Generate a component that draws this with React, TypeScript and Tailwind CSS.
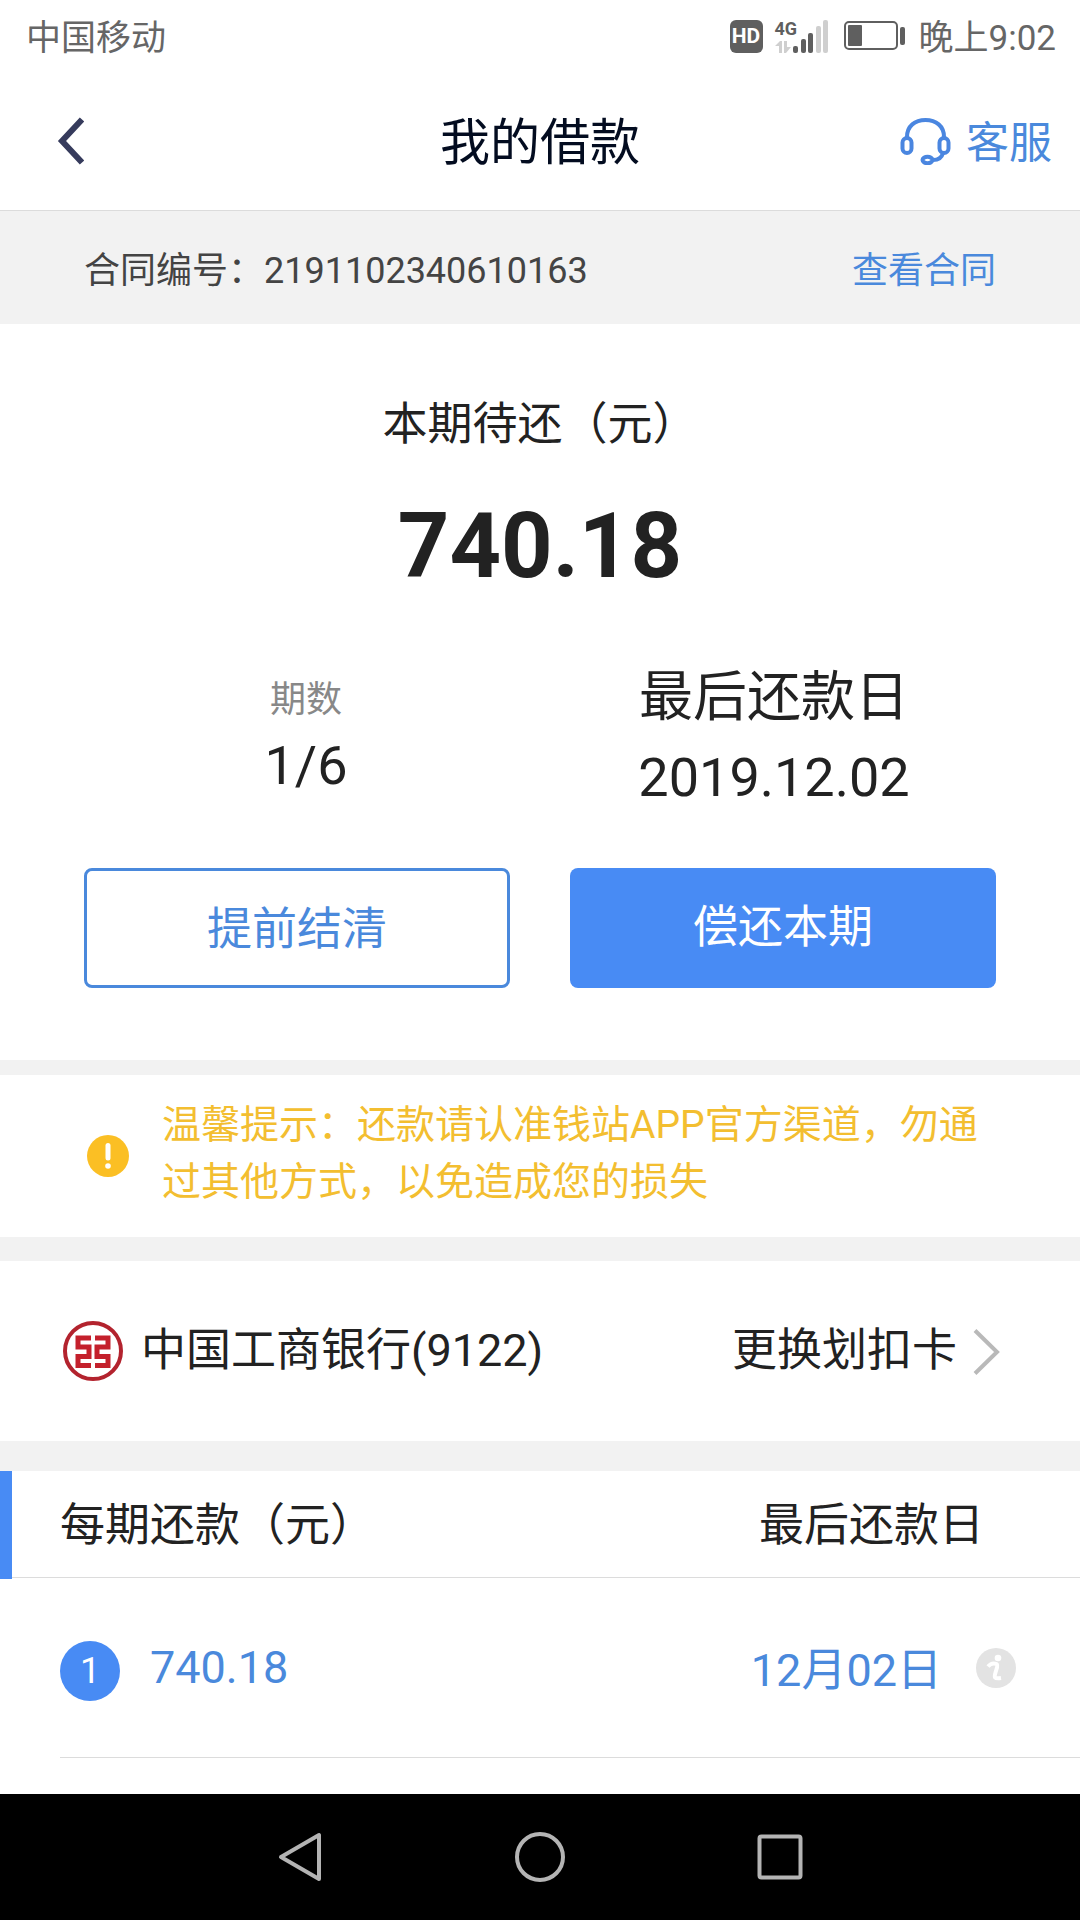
import type { ReactNode } from 'react';

const FONT = "font-[Roboto,'Noto_Sans_CJK_SC',sans-serif]";

const installments = [{ no: 1, amount: '740.18', date: '12月02日' }];

function SignalIcon() {
  return (
    <svg width="35" height="33" viewBox="0 0 35 33" aria-hidden="true">
      <rect x="0" y="26" width="5" height="7" rx="2" fill="#5f5f5f" />
      <rect x="8" y="19" width="5" height="14" rx="2" fill="#5f5f5f" />
      <rect x="15" y="13" width="5" height="20" rx="2" fill="#5f5f5f" />
      <rect x="23" y="6" width="5" height="27" rx="2" fill="#cfcfcf" />
      <rect x="30" y="0" width="5" height="33" rx="2" fill="#cfcfcf" />
    </svg>
  );
}

function DataArrows() {
  return (
    <svg width="16" height="12" viewBox="0 0 16 12" aria-hidden="true" fill="#cfcfcf">
      <path d="M0 5 L5 0 H7 V12 H4 V5 Z" />
      <path d="M9 0 H12 V6 H16 L11 12 H9 Z" />
    </svg>
  );
}

function BatteryIcon() {
  return (
    <svg width="61" height="30" viewBox="0 0 61 30" aria-hidden="true">
      <rect x="1" y="1" width="52" height="27" rx="4" fill="none" stroke="#5f5f5f" strokeWidth="2" />
      <rect x="4" y="4" width="14" height="21" rx="1" fill="#5f5f5f" />
      <rect x="56" y="6" width="5" height="18" rx="2" fill="#5f5f5f" />
    </svg>
  );
}

function HeadsetIcon() {
  return (
    <svg width="51" height="48" viewBox="0 0 51 48" fill="none" stroke="#4a86e0" strokeWidth="4" aria-hidden="true">
      <path d="M7 20 C7 9 15 3 25.500 3 C36 3 44 9 44 20" />
      <rect x="2.500" y="21" width="9" height="15" rx="4.500" />
      <rect x="39.500" y="21" width="9" height="15" rx="4.500" />
      <ellipse cx="27.500" cy="43" rx="5" ry="3.200" />
      <path d="M33 43 C39 43 42 40 43 36" />
    </svg>
  );
}

function BankLogo() {
  return (
    <svg width="60" height="60" viewBox="0 0 60 60" fill="none" aria-hidden="true">
      <circle cx="30" cy="30" r="28" stroke="#b3232e" strokeWidth="4" />
      <g stroke="#c4202c" strokeWidth="5">
        <path d="M28 17 H15 V26 H26 V35.500 H15 V44.500 H28" />
        <path d="M32 17 H45 V26 H34 V35.500 H45 V44.500 H32" />
      </g>
    </svg>
  );
}

function InfoIcon() {
  return (
    <svg width="40" height="40" viewBox="0 0 40 40" fill="none" aria-hidden="true">
      <circle cx="20" cy="20" r="20" fill="#e3e3e3" />
      <circle cx="22" cy="10" r="3.300" fill="#fff" />
      <path
        d="M12 18.500 C14.500 15.500 18 15 20.500 16 C22.500 17 20.500 21 19.500 24.500 C18 29.500 18 31 25 30"
        stroke="#fff"
        strokeWidth="4"
      />
    </svg>
  );
}

function StatusBar() {
  return (
    <div className="flex h-[72px] items-center justify-between pl-[26px] pr-6 text-[35px] leading-[40px] text-[#666]">
      <span className="pt-1.5">中国移动</span>
      <div className="flex items-center">
        <span className="flex h-[33px] w-[33px] items-center justify-center rounded-md bg-[#5f5f5f] text-[21px] font-bold text-white">
          HD
        </span>
        <div className="ml-3 flex h-[33px] w-[18px] flex-col justify-between">
          <span className="font-['Liberation_Sans_Narrow',Roboto,sans-serif] text-[18px] font-bold leading-[18px] text-[#5f5f5f]">
            4G
          </span>
          <DataArrows />
        </div>
        <SignalIcon />
        <div className="ml-4 mr-[14px]">
          <BatteryIcon />
        </div>
        <span className="pt-1.5">晚上9:02</span>
      </div>
    </div>
  );
}

function Header() {
  return (
    <header className="grid h-[139px] grid-cols-[1fr_auto_1fr] items-center border-b border-[#dcdcdc] px-7">
      <button type="button" aria-label="返回" className="justify-self-start pl-7">
        <svg width="28" height="48" viewBox="0 0 28 48" fill="none" stroke="#363b5c" strokeWidth="6">
          <path d="M26 2.500 L6 24 L26 45.500" />
        </svg>
      </button>
      <h1 className="pt-1 text-[50px] leading-[60px] text-[#030c20]">我的借款</h1>
      <a href="#service" className="flex items-center gap-[15px] justify-self-end text-[43px] leading-[60px] text-[#4a89dc]">
        <HeadsetIcon />
        <span className="pt-1">客服</span>
      </a>
    </header>
  );
}

function Stat({ label, children }: { label: ReactNode; children: ReactNode }) {
  return (
    <div className="flex flex-col items-center">
      {label}
      {children}
    </div>
  );
}

export default function App() {
  return (
    <div className={`flex min-h-screen flex-col bg-white text-[#222] ${FONT}`} lang="zh-CN">
      <StatusBar />
      <Header />

      <div className="flex h-[113px] items-center justify-between bg-[#f2f2f2] px-[84px] pt-1.5 text-[36px]">
        <p className="text-[#444]">合同编号：2191102340610163</p>
        <a href="#contract" className="text-[#4a89dc]">查看合同</a>
      </div>

      <section className="pb-[72px] pt-[71px] text-center">
        <h2 className="text-[45px] leading-[60px]">本期待还（元）</h2>
        <p className="mt-[38px] text-[90px] font-bold leading-[108px]">740.18</p>
        <div className="mt-[61px] grid grid-cols-2 px-[72px]">
          <Stat label={<span className="mt-[12px] text-[36px] leading-[52px] text-[#888]">期数</span>}>
            <span className="mt-[5px] text-[54px] leading-[70px]">1/6</span>
          </Stat>
          <Stat label={<span className="text-[54px] leading-[72px]">最后还款日</span>}>
            <span className="mt-[9px] text-[54px] leading-[70px]">2019.12.02</span>
          </Stat>
        </div>
        <div className="mt-[55px] grid grid-cols-2 gap-[60px] px-[84px] text-[45px]">
          <button type="button" className="h-[120px] rounded-lg border-[3px] border-[#4a89dc] pt-1 text-[#4a89dc]">
            提前结清
          </button>
          <button type="button" className="h-[120px] rounded-lg bg-[#488bf4] text-white">
            偿还本期
          </button>
        </div>
      </section>

      <div className="h-[15px] bg-[#f2f2f2]" />

      <div className="flex h-[162px] items-center pl-[87px] pr-[84px]">
        <svg width="42" height="42" viewBox="0 0 42 42" className="shrink-0" aria-hidden="true">
          <circle cx="21" cy="21" r="21" fill="#fbbf24" />
          <path d="M21 10.500 V23" stroke="#fff" strokeWidth="5" strokeLinecap="round" />
          <circle cx="21" cy="31" r="2.800" fill="#fff" />
        </svg>
        <p className="ml-[33px] pb-1 text-[39px] leading-[57px] text-[#f3be30]">
          温馨提示：还款请认准钱站APP官方渠道，勿通过其他方式，以免造成您的损失
        </p>
      </div>

      <div className="h-6 bg-[#f2f2f2]" />

      <div className="flex h-[180px] items-center justify-between pl-[63px] pr-20 text-[45px]">
        <div className="flex items-center gap-[18px]">
          <BankLogo />
          <span>中国工商银行(9122)</span>
        </div>
        <a href="#card" className="flex items-center gap-4">
          更换划扣卡
          <svg width="27" height="48" viewBox="0 0 27 48" fill="none" stroke="#b9b9b9" strokeWidth="4" aria-hidden="true">
            <path d="M2 3.500 L24 25 L2 46.500" />
          </svg>
        </a>
      </div>

      <div className="h-[30px] bg-[#f2f2f2]" />

      <table className="w-full text-[45px]">
        <thead>
          <tr className="align-top">
            <th className="p-0 text-left font-normal">
              <div className="flex h-[108px]">
                <span className="w-3 bg-[#488bf4]" />
                <span className="flex h-[107px] flex-1 items-center border-b border-[#dcdcdc] pl-12 pt-1">
                  每期还款（元）
                </span>
              </div>
            </th>
            <th className="p-0 font-normal">
              <div className="flex h-[107px] items-center justify-end border-b border-[#dcdcdc] pr-24 pt-1">最后还款日</div>
            </th>
          </tr>
        </thead>
        <tbody className="text-[#4a89dc]">
          {installments.map((item) => (
            <tr key={item.no}>
              <td className="p-0">
                <div className="ml-[60px] flex h-[179px] items-center gap-[30px] border-b border-[#dcdcdc]">
                  <span className="mt-1.5 flex h-[60px] w-[60px] items-center justify-center rounded-full bg-[#488bf4] text-[36px] text-white">
                    {item.no}
                  </span>
                  {item.amount}
                </div>
              </td>
              <td className="p-0">
                <div className="flex h-[179px] items-center justify-end gap-[34px] border-b border-[#dcdcdc] pr-16">
                  <span className="pt-1.5">{item.date}</span>
                  <button type="button" aria-label="说明">
                    <InfoIcon />
                  </button>
                </div>
              </td>
            </tr>
          ))}
        </tbody>
      </table>

      <nav className="mt-auto bg-black">
        <div className="mx-auto grid h-[126px] w-2/3 grid-cols-3 place-items-center">
          <button type="button" aria-label="后退">
            <svg width="44" height="50" viewBox="0 0 44 50" fill="none" stroke="#b4b4b4" strokeWidth="4" strokeLinejoin="round">
              <path d="M41 3 V47 L3 25 Z" />
            </svg>
          </button>
          <button type="button" aria-label="主页">
            <svg width="50" height="50" viewBox="0 0 50 50" fill="none" stroke="#b4b4b4" strokeWidth="4">
              <circle cx="25" cy="25" r="23" />
            </svg>
          </button>
          <button type="button" aria-label="最近任务">
            <svg width="46" height="46" viewBox="0 0 46 46" fill="none" stroke="#b4b4b4" strokeWidth="4">
              <rect x="2.500" y="2.500" width="41" height="41" rx="2" />
            </svg>
          </button>
        </div>
      </nav>
    </div>
  );
}
